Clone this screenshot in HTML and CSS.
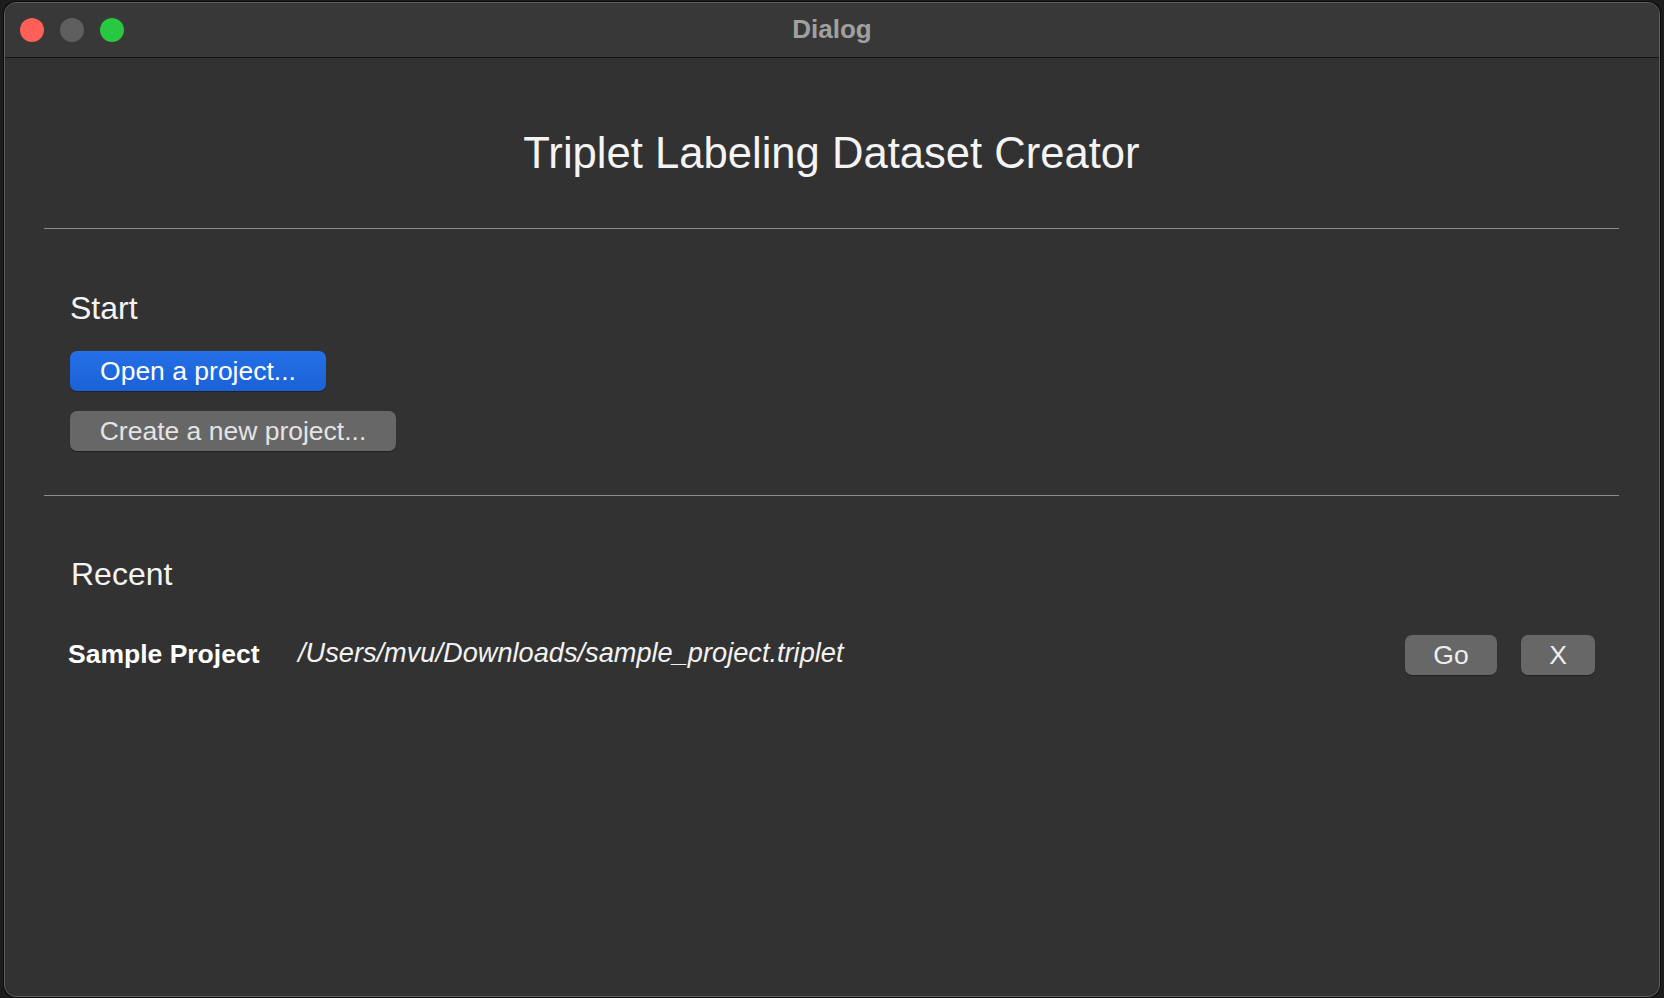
FILE: index.html
```html
<!DOCTYPE html>
<html>
<head>
<meta charset="utf-8">
<title>Dialog</title>
<link rel="stylesheet" href="styles.css">
</head>
<body>
<div class="screen">
  <div class="window">
    <div class="titlebar">
      <div class="lights">
        <span class="light red"></span>
        <span class="light gray"></span>
        <span class="light green"></span>
      </div>
      <div class="title">Dialog</div>
    </div>
    <div class="content">
      <h1 class="heading">Triplet Labeling Dataset Creator</h1>
      <div class="rule"></div>
      <section class="start">
        <h2 class="section-title">Start</h2>
        <button class="btn btn-primary">Open a project...</button>
        <button class="btn btn-secondary btn-create">Create a new project...</button>
      </section>
      <div class="rule rule-2"></div>
      <section class="recent">
        <h2 class="section-title recent-title">Recent</h2>
        <div class="recent-row">
          <span class="project-name">Sample Project</span>
          <span class="project-path">/Users/mvu/Downloads/sample_project.triplet</span>
          <button class="btn btn-secondary btn-go">Go</button>
          <button class="btn btn-secondary btn-x">X</button>
        </div>
      </section>
    </div>
  </div>
</div>
</body>
</html>
```
FILE: styles.css
```css
html, body {
  margin: 0;
  padding: 0;
}
body {
  background: #1c1c1c;
  width: 1664px;
  height: 998px;
  overflow: hidden;
  font-family: "Liberation Sans", Arial, sans-serif;
  color: #ffffff;
}
.screen {
  padding: 2px 4px 0 4px;
  height: 998px;
  box-sizing: border-box;
}
.window {
  height: 995px;
  box-sizing: border-box;
  border: 1px solid #5e5e5e;
  border-radius: 12px;
  box-shadow: 0 0 0 1px #0b0b0b;
  background: #323232;
  overflow: hidden;
  display: flex;
  flex-direction: column;
}
.titlebar {
  position: relative;
  height: 54px;
  flex: 0 0 54px;
  background: #383838;
  border-bottom: 1px solid #131313;
  display: flex;
  align-items: center;
  justify-content: center;
}
.lights {
  position: absolute;
  left: 15px;
  top: 15px;
  display: flex;
  gap: 16px;
}
.light {
  width: 24px;
  height: 24px;
  border-radius: 50%;
  display: block;
}
.red { background: #fe5f57; }
.gray { background: #5f5f5f; }
.green { background: #28c840; }
.title {
  font-weight: bold;
  font-size: 26px;
  color: #a0a0a0;
  margin-top: -1px;
}
.content {
  flex: 1;
  padding: 0 40px 0 39px;
  display: flex;
  flex-direction: column;
}
.heading {
  margin: 70px 0 0 0;
  font-weight: normal;
  font-size: 43.6px;
  line-height: 50px;
  text-align: center;
  color: #f4f4f4;
}
.rule {
  height: 1px;
  background: #8c8c8c;
  margin-top: 50px;
}
.rule-2 {
  margin-top: 44px;
}
.start {
  display: flex;
  flex-direction: column;
  align-items: flex-start;
  padding-left: 26px;
}
.section-title {
  margin: 61px 0 0 0;
  font-weight: normal;
  font-size: 32px;
  line-height: 37px;
  color: #f4f4f4;
}
.btn {
  font-family: "Liberation Sans", Arial, sans-serif;
  height: 40px;
  border: none;
  border-radius: 7px;
  font-size: 26.5px;
  padding: 0;
  box-shadow: 0 1px 1px rgba(0,0,0,0.35);
  cursor: default;
}
.btn-primary {
  margin-top: 24px;
  width: 256px;
  background: linear-gradient(#2470e6, #1b61d8);
  color: #ffffff;
}
.btn-secondary {
  background: #676767;
  color: #e4e4e4;
}
.btn-create {
  margin-top: 20px;
  width: 326px;
}
.recent {
  display: flex;
  flex-direction: column;
}
.recent-title {
  margin-top: 60px;
  padding-left: 27px;
}
.recent-row {
  margin-top: 42px;
  display: flex;
  align-items: center;
  padding-left: 24px;
  padding-right: 24px;
}
.project-name {
  font-weight: bold;
  font-size: 26.5px;
  color: #ffffff;
  width: 230px;
  margin-top: -2px;
}
.project-path {
  font-style: italic;
  font-size: 27.2px;
  color: #f2f2f2;
  flex: 1;
  margin-top: -4px;
}
.btn-go {
  width: 92px;
  color: #eeeeee;
}
.btn-x {
  width: 74px;
  margin-left: 24px;
  color: #eeeeee;
}
```
